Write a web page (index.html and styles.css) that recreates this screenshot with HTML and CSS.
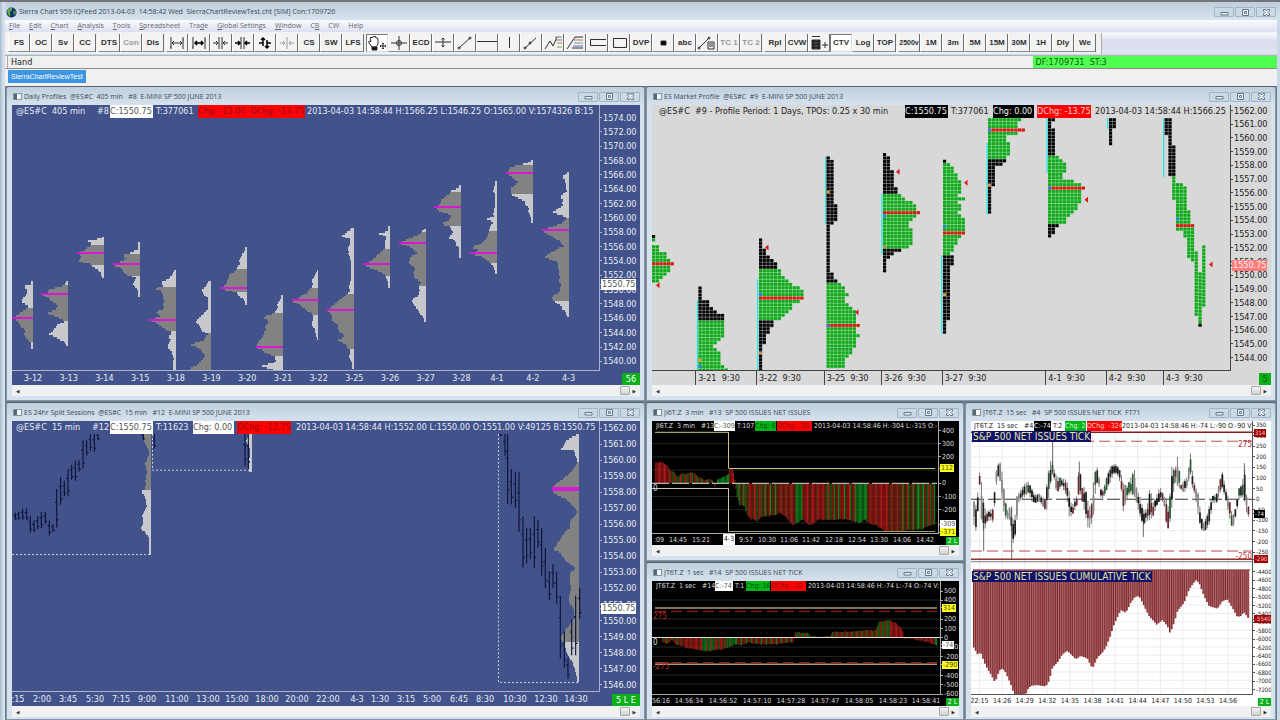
FILE: index.html
```html
<!DOCTYPE html>
<html lang="en">
<head>
<meta charset="utf-8">
<title>Sierra Chart</title>
<link rel="stylesheet" href="styles.css">
</head>
<body>
<div class="app">
  <header class="titlebar">
    <svg class="logo" viewBox="0 0 12 12"><circle cx="6" cy="6" r="5.5" fill="#12306e"/><path d="M2 3Q4 0 7 1L6 4 4 6 5 9 4 10Q0 7 2 3Z" fill="#5fb04a"/><path d="M8 4L11 5 10 9 8 8Z" fill="#4a9a50"/></svg>
    <h1 class="caption">Sierra Chart 959 IQFeed 2013-04-03&nbsp; 14:58:42 Wed&nbsp; SierraChartReviewTest.cht [SIM] Con:1709726</h1>
    <div class="winbtns"><button aria-label="Minimize"><svg viewBox="0 0 9 7"><path d="M1 3.5H8V6H1Z"/></svg></button><button aria-label="Restore"><svg viewBox="0 0 9 7"><path d="M1.5 .5H7.5V6.5H1.5ZM3.5 2.5H5.5V4.5H3.5Z"/></svg></button><button aria-label="Close"><svg viewBox="0 0 9 7"><path d="M1.5 .5H3.5L4.5 2 5.5 .5H7.5V2L6 3.5 7.5 5V6.5H5.5L4.5 5 3.5 6.5H1.5V5L3 3.5 1.5 2Z"/></svg></button></div>
  </header>
  <nav class="menu">
    <button><u>F</u>ile</button><button><u>E</u>dit</button><button><u>C</u>hart</button><button><u>A</u>nalysis</button><button><u>T</u>ools</button><button><u>S</u>preadsheet</button><button>Tra<u>d</u>e</button><button><u>G</u>lobal Settings</button><button><u>W</u>indow</button><button>C<u>B</u></button><button>CW</button><button>Help</button>
  </nav>
  <div class="toolbar">
    <div class="group"><button>FS</button><button>OC</button><button>Sv</button><button>CC</button></div>
    <div class="group"><button>DTS</button><button class="dim">Con</button><button>Dis</button></div>
    <div class="group">
      <button aria-label="Bar spacing wide"><svg viewBox="0 0 20 16"><path d="M4 2V14M16 2V14M4 12H3M16 5H17M5 8H15M7 6L5 8 7 10M13 6L15 8 13 10"/></svg></button>
      <button aria-label="Bar spacing medium"><svg viewBox="0 0 20 16"><path d="M4 2V14M16 2V14M4 12H3M16 5H17"/><path class="bold" d="M6 8H14M8 6L6 8 8 10M12 6L14 8 12 10"/></svg></button>
      <button aria-label="Bar spacing narrow"><svg viewBox="0 0 20 16"><path d="M8 2V14M11 2V14M2 8H7M5 6L7 8 5 10M17 8H12M14 6L12 8 14 10"/></svg></button>
      <button aria-label="Bar spacing tight"><svg viewBox="0 0 20 16"><path d="M8 2V14M11 2V14"/><path class="bold" d="M2 8H7M5 6L7 8 5 10M17 8H12M14 6L12 8 14 10"/></svg></button>
      <button aria-label="Scale vertical"><svg viewBox="0 0 20 16"><path class="bold" d="M8 4V11M12 5V12M4 8H8M12 8H16M6 5L8 3 10 5M10 11L12 13 14 11"/></svg></button>
      <button aria-label="Scale reset" class="dim"><svg viewBox="0 0 20 16"><path d="M10 2V14M3 8H8M6 6L8 8 6 10M17 8H12M14 6L12 8 14 10"/></svg></button>
      <button>CS</button><button>SW</button><button>LFS</button>
    </div>
    <div class="group">
      <button class="on" aria-label="Hand"><svg viewBox="0 0 20 16"><path d="M5 12L2 8Q1 6 3 6L4 7 3 3Q4 1 5 3Q6 0 7 2Q9 0 9 3Q11 2 11 5V9L9 12Z" fill="#fff"/><path d="M5 12H10V15H5Z" fill="#111"/><path d="M13 11H19M16 8V14M14 10L13 11 14 12M18 10L19 11 18 12M15 9L16 8 17 9M15 13L16 14 17 13"/></svg></button>
      <button aria-label="Crosshair"><svg viewBox="0 0 20 16"><path d="M2 8H18M10 1V15"/><circle cx="10" cy="8" r="2.5"/></svg></button>
      <button>ECD</button>
      <button aria-label="Balance"><svg viewBox="0 0 20 16"><path d="M2 7H18M10 3V12M8.500 10.500L10 12 11.500 10.500M8.500 4.500L10 3 11.500 4.500"/></svg></button>
      <button aria-label="Line"><svg viewBox="0 0 20 16"><path d="M4 13L15 3"/><circle cx="4" cy="13" r="1"/><circle cx="15" cy="3" r="1"/></svg></button>
      <button aria-label="Horizontal line"><svg viewBox="0 0 20 16"><path d="M0 6.500H20"/></svg></button>
      <button aria-label="Vertical line"><svg viewBox="0 0 20 16"><path d="M10.500 2V13"/></svg></button>
      <button aria-label="Ray"><svg viewBox="0 0 20 16"><path d="M4 13L15 3"/><circle cx="4" cy="13" r="1"/><circle cx="9" cy="8" r="1"/></svg></button>
      <button aria-label="Expansion"><svg viewBox="0 0 20 16"><path d="M2 14L7 6 10 11 14 2"/><path d="M12 2H19M13 5H19" stroke="#777"/><path d="M14 8H19" stroke="#c66"/><path d="M14 12H19" stroke="#6a6"/></svg></button>
      <button aria-label="Retracement"><svg viewBox="0 0 20 16"><path d="M2 14L10 2H18M7 13H18"/><path d="M9 5H18" stroke="#c66"/><path d="M9 8H18" stroke="#6a6"/><path d="M8 11H18" stroke="#66c"/></svg></button>
      <button aria-label="Extended rectangle"><svg viewBox="0 0 20 16"><path d="M19 4.500H3.500V10.500H19"/></svg></button>
      <button aria-label="Rectangle"><svg viewBox="0 0 20 16"><path d="M4.500 3.500H17.500V12.500H4.500Z"/></svg></button>
      <button>DVP</button>
      <button aria-label="Marker"><svg viewBox="0 0 20 16"><path d="M8 6H13V10H8Z" fill="#000"/></svg></button>
      <button>abc</button>
      <button aria-label="Calculator"><svg viewBox="0 0 20 16"><path d="M2 13L12 3M11 7H17V14H11ZM12 9H16M12 11H16"/><circle cx="2" cy="13" r="1"/><circle cx="12" cy="3" r="1"/></svg></button>
      <button class="dim">TC 1</button><button class="dim">TC 2</button>
    </div>
    <div class="group">
      <button>Rpl</button><button>CVW</button>
      <button aria-label="Trade grid"><svg viewBox="0 0 20 16"><path d="M3 5H11V14H3Z" fill="#111"/><path d="M3 1.500H11M13 10H19M16 7V13"/><path d="M3 8H11M3 11H11M6 5V14M8 5V14" stroke="#777" stroke-width=".5"/></svg></button>
      <button class="on">CTV</button><button>Log</button><button>TOP</button>
    </div>
    <div class="group"><button class="narrow">2500v</button><button>1M</button><button>3m</button><button>5M</button><button>15M</button><button>30M</button><button>1H</button><button>Dly</button><button>We</button></div>
    <div class="rest"></div>
  </div>
  <div class="status"><output class="hint">Hand</output><output class="feed">DF:1709731&nbsp; ST:3</output></div>
  <div class="tabs"><button>SierraChartReviewTest</button></div>

  <main class="mdi">
    <section class="win blue" id="w8">
      <div class="bar"><span class="ico"></span><h2 class="caption">Daily Profiles&nbsp; @ES#C&nbsp; 405 min&nbsp;&nbsp; #8&nbsp; E-MINI SP 500 JUNE 2013</h2></div>
      <div class="chart">
        <div class="view">
          <div class="quote"><span class="sym">@ES#C&nbsp; 405 min</span><span class="num">#8</span><span class="white close">C:1550.75</span><span class="ticks">T:377061</span><span class="red chg2">Chg: -13.00&nbsp; DChg: -13.75</span><span>2013-04-03 14:58:44 H:1566.25 L:1546.25 O:1565.00 V:1574326 B:15</span></div>
          <svg class="plot" viewBox="12 118 587 253" preserveAspectRatio="none"></svg>
        </div>
        <div class="price"></div><div class="time"></div><div class="corner"><b>56</b></div>
      </div>
    </section>

    <section class="win grey" id="w9">
      <div class="bar"><span class="ico"></span><h2 class="caption">ES Market Profile&nbsp; @ES#C&nbsp; #9&nbsp; E-MINI SP 500 JUNE 2013</h2></div>
      <div class="chart">
        <div class="view">
          <div class="quote"><span class="sym long">@ES#C&nbsp; #9 - Profile Period: 1 Days, TPOs: 0.25 x 30 min</span><span class="black close">C:1550.75</span><span class="ticks">T:377061</span><span class="black chg">Chg: 0.00</span><span class="red dchg">DChg: -13.75</span><span>2013-04-03 14:58:44 H:1566.25</span></div>
          <svg class="plot" viewBox="652 118 578 253" preserveAspectRatio="none"></svg>
        </div>
        <div class="price"></div><div class="time"></div><div class="corner"><b class="one">5</b></div>
      </div>
    </section>

    <section class="win blue last" id="w12">
      <div class="bar"><span class="ico"></span><h2 class="caption">ES 24hr Split Sessions&nbsp; @ES#C&nbsp; 15 min&nbsp;&nbsp; #12&nbsp; E-MINI SP 500 JUNE 2013</h2></div>
      <div class="chart">
        <div class="view">
          <div class="quote"><span class="sym">@ES#C&nbsp; 15 min</span><span class="num">#12</span><span class="white close">C:1550.75</span><span class="ticks">T:11623</span><span class="white chg">Chg: 0.00</span><span class="red dchg">DChg: -13.75</span><span>2013-04-03 14:58:44 H:1552.00 L:1550.00 O:1551.00 V:49125 B:1550.75</span></div>
          <svg class="plot" viewBox="12 433 587 259" preserveAspectRatio="none"></svg>
        </div>
        <div class="price"></div><div class="time"></div><div class="corner"><b class="wide">5 L E</b></div>
      </div>
    </section>

    <div class="quad">
      <section class="win dark" id="w13">
        <div class="bar"><span class="ico"></span><h2 class="caption">JI6T.Z&nbsp; 3 min&nbsp;&nbsp; #13&nbsp; SP 500 ISSUES NET ISSUES</h2></div>
        <div class="chart">
          <div class="view">
            <div class="quote"><span class="sym">JI6T.Z&nbsp; 3 min</span><span class="num">#13</span><span class="white close">C:-309</span><span class="ticks">T:107</span><span class="green chg">Chg: 6</span><span class="red dchg">DChg: -36</span><span>2013-04-03 14:58:46 H:-304 L:-315 O:-</span></div>
            <svg class="plot" viewBox="652 431 286 102" preserveAspectRatio="none"></svg>
            <span class="note zero13">0</span>
          </div>
          <div class="price"></div><div class="time"></div><div class="corner"><b>2 L</b></div>
        </div>
      </section>
      <section class="win white-bg last tall" id="w4">
        <div class="bar"><span class="ico"></span><h2 class="caption">JT6T.Z&nbsp; 15 sec&nbsp;&nbsp; #4&nbsp; SP 500 ISSUES NET TICK&nbsp; FT71</h2></div>
        <div class="chart">
          <div class="view">
            <div class="quote"><span class="sym">JT6T.Z&nbsp; 15 sec</span><span class="num">#4</span><span class="black close">C:-74</span><span class="ticks">T:2</span><span class="green chg">Chg: 2</span><span class="red dchg">DChg: -324</span><span>2013-04-03 14:58:46 H:-74 L:-90 O:-90 V:</span></div>
            <svg class="plot" viewBox="971 431 281 264" preserveAspectRatio="none"></svg>
            <span class="study tick">S&amp;P 500 NET ISSUES TICK</span>
            <span class="study cumulative">S&amp;P 500 NET ISSUES CUMULATIVE TICK</span>
            <span class="note hi4">275</span><span class="note lo4">-250</span>
          </div>
          <div class="price"></div><div class="time"></div><div class="corner"><b>2 L</b></div>
        </div>
      </section>
      <section class="win dark last" id="w14">
        <div class="bar"><span class="ico"></span><h2 class="caption">JT6T.Z&nbsp; 1 sec&nbsp;&nbsp; #14&nbsp; SP 500 ISSUES NET TICK</h2></div>
        <div class="chart">
          <div class="view">
            <div class="quote"><span class="sym">JT6T.Z&nbsp; 1 sec</span><span class="num">#14</span><span class="white close">C:-74</span><span class="ticks">T:1</span><span class="green chg">Chg: 16</span><span class="red dchg">DChg: -32</span><span>2013-04-03 14:58:46 H:-74 L:-74 O:-74 V:</span></div>
            <svg class="plot" viewBox="652 591 288 103" preserveAspectRatio="none"></svg>
            <span class="note hi14">275</span><span class="note zero14">0</span><span class="note lo14">-275</span>
          </div>
          <div class="price"></div><div class="time"></div><div class="corner"><b>2 L</b></div>
        </div>
      </section>
    </div>
  </main>
</div>
<script src="script.js"></script>
</body>
</html>
```

FILE: styles.css
```css
* { box-sizing: border-box; }
body { margin: 0; background: #c9d8e8; color: #222; font-family: "DejaVu Sans Condensed", "Noto Sans", sans-serif; font-size: 9px; line-height: 12px; }
button { font: inherit; color: inherit; margin: 0; padding: 0; border: 0; background: none; }
h1, h2 { margin: 0; font-weight: normal; }

.app { display: flex; flex-direction: column; height: 100vh; min-height: 480px; border-top: 2px solid #70757c; padding: 0 3px 0 5px; background: linear-gradient(90deg, #a9bacb 0, #dbe7f1 4px, #c9d8e8 5px); overflow: hidden; }
.caption { flex: 1; min-width: 0; overflow: hidden; white-space: nowrap; font-family: "Open Sans", "Noto Sans", sans-serif; font-size: 7px; line-height: 12px; color: #3c4854; }
.titlebar { display: flex; align-items: center; gap: 2px; height: 18px; padding-top: 2px; background: linear-gradient(#bfcddb, #d7e4ef); margin-right: -3px; padding-right: 4px; }
.logo { width: 11px; height: 11px; margin-left: 1px; }
.winbtns { display: flex; gap: 1px; }
.winbtns button { display: grid; place-items: center; width: 20px; height: 10px; border: 1px solid #a3b4c5; border-radius: 1px; background: #cbd9e6; }
.winbtns svg { width: 9px; height: 7px; fill: #eef3f8; stroke: #66778a; stroke-width: 1; }

.menu { display: flex; gap: 9px; height: 12px; padding-left: 4px; background: linear-gradient(#fbfbfe, #dcdff0); font-family: "Open Sans", "Noto Sans", sans-serif; font-size: 7px; line-height: 10px; color: #666870; }
.toolbar { display: flex; gap: 2px; height: 22px; padding-left: 3px; background: #f1f1f1; }
.group { display: flex; padding: 2px 0 0; }
.group button { display: grid; place-items: center; width: 22px; height: 18px; border-right: 1px solid #6e6e6e; border-bottom: 1px solid #8c8c8c; border-left: 1px solid #fff; font-family: "Liberation Sans", sans-serif; font-weight: bold; font-size: 8px; color: #2e2e2e; background: #f3f3f3; }
.group .on { background: #fff; border: 1px solid #777; border-right-color: #ddd; border-bottom-color: #ddd; }
.group .dim { color: #9a9a9a; }
.group .narrow { font-size: 7px; }
.group svg { width: 20px; height: 16px; fill: none; stroke: currentColor; stroke-width: 1; }
.group svg .bold { stroke: #000; stroke-width: 1.5; }
.rest { flex: 1; margin: 1px 0 0 3px; border-left: 1px solid #aaa; background: linear-gradient(#fafafe, #d9dced 40%, #dfe2f1); }
.status { display: flex; height: 14px; margin-top: 1px; border-top: 1px solid #b5b5b5; border-bottom: 1px solid #8a8a8a; background: #f0f0f0; line-height: 13px; }
.status output { padding-left: 3px; }
.hint { flex: 1028; margin-left: 2px; border-left: 1px solid #aaa; }
.feed { flex: 243; background: #50ff50; color: #145514; white-space: nowrap; }
.tabs { height: 17px; padding-left: 3px; background: #f0f0f0; }
.tabs button { display: block; height: 13px; padding: 0 3px; margin-top: 1px; background: #3d96e2; color: #fff; font-family: "Liberation Sans", sans-serif; font-size: 7px; }

.mdi { flex: 1; min-height: 0; display: grid; grid-template: minmax(0, 315fr) minmax(0, 318fr) / minmax(0, 639fr) minmax(0, 630fr); gap: 1px; padding-left: 1px; padding-right: 1px; background: #6f7d8c; }
.quad { display: grid; grid-template: minmax(0, 159fr) minmax(0, 158fr) / minmax(0, 318fr) minmax(0, 311fr); gap: 1px; }
.tall { grid-row: span 2; }
.win { display: flex; flex-direction: column; min-width: 0; padding: 0 4px 4px 5px; border: 1px solid #8595a6; border-top-color: #566473; border-radius: 3px 3px 0 0; background: linear-gradient(#c0cfdd, #d5e2ee 18px); overflow: hidden; }
.last { padding-bottom: 2px; }
.bar { display: flex; align-items: center; gap: 2px; flex: 0 0 18px; padding-top: 1px; }
.ico { width: 9px; height: 7px; margin-left: 1px; border: 1px solid #8393a3; background: linear-gradient(90deg, #567 3px, #f4f8fb 3px); }
.chart { flex: 1; min-height: 0; display: grid; grid-template: minmax(0, 1fr) 14px / minmax(0, 1fr) 41px; background: var(--bg); color: var(--ink); overflow: hidden; }
.blue { --bg: #42528a; --ink: #e6ebf4; --line: #aab3cc; }
.grey { --bg: #d8d8d8; --ink: #222; --line: #444; }
.dark { --bg: #000; --ink: #ddd; --line: #aaa; }
.white-bg { --bg: #fff; --ink: #222; --line: #555; }
.view { position: relative; display: flex; flex-direction: column; min-height: 0; border-bottom: 1px solid var(--line); overflow: hidden; }
.quote { display: flex; flex: 0 0 13px; padding-left: 4px; line-height: 13px; white-space: pre; overflow: hidden; }
.quote span { flex: none; overflow: hidden; }
.plot { display: block; flex: 1; width: 100%; min-height: 0; }
.sym { width: 81px; } .num { width: 13px; } .close { width: 43px; } .ticks { width: 45px; padding-left: 3px; } .chg2 { width: 107px; margin-right: 2px; } .chg { width: 41px; margin-right: 3px; } .dchg { width: 54px; margin-right: 4px; }
#w9 .quote { padding-left: 7px; } #w9 .long { width: 246px; }
#w12 .sym { width: 76px; } #w12 .num { width: 18px; } #w12 .ticks { width: 40px; } #w12 .dchg { margin-right: 5px; }
.white { background: #fff; color: #555; } .black { background: #000; color: #eee; } .red { background: #f00; color: #8f1010; } .green { background: #00b418; color: #065006; }
#w9 .red, #w4 .red { color: #ffd0d0; } #w4 .green { color: #d8ffd8; }

.price { display: flex; flex-direction: column; border-left: 1px solid var(--line); }
.price span { display: flex; align-items: center; height: 0; flex: none; white-space: nowrap; gap: 1px; }
.price span::before { content: ""; width: 2px; height: 1px; flex: none; background: var(--line); }
.price b { font-weight: normal; position: relative; z-index: 1; margin-left: -2px; padding: 0 1px; line-height: 11px; }
.time { display: flex; overflow: hidden; line-height: 15px; white-space: pre; }
.time span { display: flex; justify-content: center; width: 0; flex: none; }
.time b { font-weight: normal; background: #fff; color: #222; padding: 0 1px; }
.grey .time span { justify-content: flex-start; height: 14px; border-left: 1px solid #444; padding-left: 2px; }
.corner { display: flex; justify-content: flex-end; align-items: flex-end; }
.corner b { width: 18px; height: 12px; line-height: 12px; text-align: center; font-weight: normal; background: #0bb11a; color: #fff; }
.corner .one { width: 12px; color: #075a0c; } .corner .wide { width: 28px; }
.p-white { background: #fff; color: #555; } .p-pink { background: #ff7d7d; color: #fff0f0; } .p-yellow { background: #ffff20; color: #444400; } .p-black { background: #000; color: #eee; } .p-maroon { background: #a00000; color: #f6cccc; }

.scroll { display: flex; align-items: center; flex: 0 0 11px; padding: 0 4px; background: #f1f1f1; color: #333; font-size: 5px; line-height: 8px; }
.scroll .thumb { width: 10px; height: 9px; margin-left: auto; margin-right: 3px; border: 1px solid #a6a6a6; border-radius: 1px; background: linear-gradient(#f5f5f5, #cfcfcf); }

.quad .chart { grid-template: minmax(0, 1fr) 11px / minmax(0, 1fr) 21px; font-size: 7px; }
#w14 .chart, #w4 .chart { grid-template-columns: minmax(0, 1fr) 19px; }
.quad .quote { flex-basis: 10px; line-height: 10px; }
.quad .time { line-height: 13px; }
.quad .time b { line-height: 11px; }
.quad .price b { line-height: 8px; }
.quad .corner b { width: 13px; height: 8px; line-height: 8px; }
.quad .sym { width: 45px; } .quad .num { width: 13px; } .quad .close { width: 21px; } .quad .ticks { width: 20px; padding-left: 2px; } .quad .chg { width: 21px; margin-right: 1px; } .quad .dchg { width: 35px; margin-right: 2px; }
#w14 .sym { width: 46px; } #w14 .close { width: 18px; } #w14 .ticks { width: 13px; } #w14 .chg { width: 24px; }
#w4 .quote { padding-left: 3px; } #w4 .sym { width: 50px; } #w4 .num { width: 10px; } #w4 .close { width: 17px; } #w4 .ticks { width: 14px; } #w4 .dchg { margin-right: 0; }
#w4 .price { font-size: 6px; }
.note { position: absolute; font-size: 8px; line-height: 9px; color: #c22c2c; }
.zero13, .zero14 { left: 1px; color: #ddd; } .zero13 { top: 56%; } .zero14 { top: 50%; }
.hi14 { left: 1px; top: 27%; } .lo14 { left: 1px; top: 72%; }
.hi4 { right: 0; top: 7%; } .lo4 { right: 0; top: 48%; }
.study { position: absolute; left: 1px; padding: 0 1px; background: #10106e; color: #e6e6a0; font-size: 10px; line-height: 11px; white-space: nowrap; }
.tick { top: 10px; } .cumulative { top: 55%; }
```

FILE: script.js
```js
const $ = (s) => document.querySelector(s);
let seed = 7;
const rnd = () => (seed = (seed * 16807) % 2147483647) / 2147483647;
const rect = (x, y, w, h, f) => `<rect x="${x.toFixed(1)}" y="${y.toFixed(1)}" width="${w.toFixed(1)}" height="${h.toFixed(1)}" fill="${f}"/>`;
const line = (d, c, extra = '') => `<path d="${d}" fill="none" stroke="${c}" ${extra}/>`;
const draw = (id, parts) => { $(id + ' .plot').innerHTML = parts.join(''); };

function interp(pts, x) {
  if (x <= pts[0][0]) return pts[0].slice(1);
  for (let i = 1; i < pts.length; i++) {
    if (x <= pts[i][0]) {
      const a = pts[i - 1], b = pts[i], t = (x - a[0]) / (b[0] - a[0]);
      return a.slice(1).map((v, k) => v + (b[k + 1] - v) * t);
    }
  }
  return pts[pts.length - 1].slice(1);
}

/* Frame controls shared by every chart window */
document.querySelectorAll('.win').forEach((w) => {
  w.querySelector('.bar').append($('.winbtns').cloneNode(true));
  w.insertAdjacentHTML('beforeend', '<div class="scroll"><span>◀</span><span class="thumb"></span><span>▶</span></div>');
});

/* Axis labels: growing spacers between zero-size label boxes */
function axis(sel, from, to, items) {
  let pos = from, html = '';
  items.sort((a, b) => a[0] - b[0]).forEach(([p, text, badge]) => {
    html += `<i style="flex:${Math.max(0, p - pos).toFixed(2)} 0 0"></i><span>${badge ? `<b class="${badge}">${text}</b>` : text}</span>`;
    pos = Math.max(pos, p);
  });
  $(sel).innerHTML = html + `<i style="flex:${(to - pos).toFixed(2)} 0 0"></i>`;
}
const steps = (n, p0, dp, v0, dv, dec = 0) => Array.from({ length: n }, (_, i) => [p0 + dp * i, (v0 + dv * i).toFixed(dec)]);

axis('#w8 .price', 105, 371, [...steps(18, 117.5, 14.35, 1574, -2, 2), [284.5, '1550.75', 'p-white']]);
axis('#w9 .price', 105, 371, [...steps(19, 110.5, 13.73, 1562, -1, 2), [265, '1550.75', 'p-pink']]);
axis('#w12 .price', 421, 692, [...steps(17, 428, 16.05, 1562, -1, 2), [608.5, '1550.75', 'p-white']]);
axis('#w13 .price', 421, 534, [...steps(7, 430.5, 13.2, 400, -100), [468, '112', 'p-yellow'], [524, '-309', 'p-white'], [532, '-371', 'p-yellow']].filter((d) => d[1] !== '100'));
axis('#w14 .price', 581, 694, [...steps(12, 591, 9.3, 500, -100), [607.5, '314', 'p-yellow'], [644, '-74', 'p-white'], [664, '-290', 'p-yellow']].filter((d) => d[1] !== '300' && d[1] !== '-300'));
axis('#w4 .price', 421, 695, [...steps(13, 425, 10.6, 350, -50), [432.5, '314', 'p-maroon'], [514, '-74', 'p-black'], [559.5, '-290', 'p-maroon'],
  ...steps(15, 572, 8.4, -4400, -200), [619.5, '-5540', 'p-maroon']]);

const days = ['3-12', '3-13', '3-14', '3-15', '3-18', '3-19', '3-20', '3-21', '3-22', '3-25', '3-26', '3-27', '3-28', '4-1', '4-2', '4-3'];
axis('#w8 .time', 12, 599, days.map((d, i) => [33 + 35.7 * i, d]));
axis('#w9 .time', 652, 1230, [[697, '3-21'], [757.5, '3-22'], [825, '3-25'], [881.7, '3-26'], [941.7, '3-27'], [1046.7, '4-1'], [1106.7, '4-2'], [1163.3, '4-3']].map(([p, t]) => [p, t + '  9:30']));
axis('#w12 .time', 12, 599, [[18, ':15'], [42, '2:00'], [68, '3:45'], [95, '5:30'], [121, '7:15'], [147, '9:00'], [177, '11:00'], [208, '13:00'], [237, '15:00'], [267, '18:00'], [297, '20:00'], [328, '22:00'], [357, '4-3'], [380, '1:30'], [406, '3:15'], [432, '5:00'], [459, '6:45'], [485, '8:30'], [515, '10:30'], [546, '12:30'], [576, '14:30']]);
axis('#w13 .time', 652, 938, [[659, ':09'], [678, '14:45'], [701, '15:21'], [729, '4-3', 'p-white'], [746, '9:57'], [767, '10:30'], [789, '11:06'], [811, '11:42'], [834, '12:18'], [857, '12:54'], [879, '13:30'], [902, '14:06'], [925, '14:42']]);
axis('#w14 .time', 652, 940, [[661, '56:16'], [689, '14:56:34'], [723, '14:56:52'], [757, '14:57:10'], [791, '14:57:28'], [825, '14:57:47'], [859, '14:58:05'], [893, '14:58:23'], [926, '14:58:41']]);
axis('#w4 .time', 971, 1252, ['22:15', '14:26', '14:29', '14:32', '14:35', '14:38', '14:41', '14:44', '14:47', '14:50', '14:53', '14:56'].map((t, i) => [979.5 + 22.6 * i, t]));

/* Volume profile: [y, width] points, value area between va0 and va1 */
function profile(xr, va0, va1, poc, pts, row = 1.8, noise = 2, pocH = 2) {
  let light = '', dark = '', i = 0, jitter = 0;
  for (let y = pts[0][0]; y < pts[pts.length - 1][0]; y += row, i++) {
    if (i % 2 === 0) jitter = (rnd() - 0.6) * noise;
    let w = interp(pts, y)[0];
    if (w > 4) w = Math.max(2, w + jitter);
    w = Math.max(2, w);
    const d = `M${(xr - w).toFixed(1)} ${y.toFixed(1)}H${xr}v${row}H${(xr - w).toFixed(1)}z`;
    if (y >= va0 - 0.5 && y < va1) dark += d; else light += d;
  }
  return `<g shape-rendering="crispEdges"><path fill="#c6c8cc" d="${light}"/><path fill="#828282" d="${dark}"/>${poc ? rect(xr - 27, poc - pocH / 2, 27, pocH, '#d818d0') : ''}</g>`;
}

draw('#w8', [
  [309, 342, 318.5, [[282, 1], [284, 2], [286, 8], [290, 6], [297, 8], [301, 12], [305, 6], [308, 4], [311, 10], [314, 14], [318, 19], [322, 14], [326, 12], [330, 8], [334, 9], [338, 6], [341, 4], [343, 1], [349.5, 1]]],
  [285, 321, 294.5, [[282, 2], [285, 4], [289, 18], [293, 22], [295, 27], [298, 20], [301, 16], [305, 10], [309, 12], [313, 22], [317, 12], [319, 5], [321, 4], [325, 12], [330, 14], [334, 20], [338, 12], [342, 4], [346, 1]]],
  [246, 265.5, 253.5, [[237, 2], [239, 8], [240, 16], [243, 12], [246, 14], [250, 20], [253, 26], [257, 24], [261, 26], [264, 14], [266, 12], [270, 6], [274, 4], [277, 1]]],
  [254.5, 276, 264.5, [[242, 1], [249, 2], [252, 8], [254, 12], [255, 18], [258, 12], [262, 20], [265, 27], [268, 18], [272, 18], [275, 12], [278, 4], [283, 8], [287, 5], [290, 2], [297, 1]]],
  [287, 331.5, 320.5, [[271, 1], [278, 6], [282, 14], [286, 12], [288, 22], [291, 14], [296, 12], [303, 12], [308, 12], [312, 20], [316, 16], [320, 27], [324, 18], [330, 8], [332, 6], [340, 6], [348, 9], [352, 4], [358, 2], [371, 3]]],
  [333.5, 372, 0, [[282, 3], [288, 9], [294, 8], [298, 3], [309, 3], [312, 8], [317, 12], [321, 17], [326, 13], [332, 8], [334, 4], [340, 8], [345, 20], [350, 10], [355, 7], [362, 10], [367, 20], [371, 22]]],
  [269, 292, 288.5, [[248, 1], [254, 5], [262, 8], [267, 8], [270, 12], [276, 18], [282, 20], [288, 26], [290, 22], [292, 12], [296, 8], [300, 3], [304, 1]]],
  [314, 357, 347.5, [[296, 1], [304, 5], [310, 8], [314, 10], [317, 20], [322, 14], [328, 18], [334, 18], [340, 22], [344, 25], [347, 26], [351, 20], [355, 14], [357, 8], [362, 6], [366, 22], [369, 14], [371, 6]]],
  [289, 315, 301, [[271, 1], [276, 4], [281, 7], [286, 6], [291, 10], [295, 16], [299, 20], [301, 27], [305, 20], [309, 14], [313, 6], [316, 5], [322, 6], [328, 5], [334, 3], [341, 1]]],
  [294.5, 350, 311, [[228, 3], [233, 8], [236, 13], [238, 4], [244, 5], [250, 7], [255, 5], [262, 3], [275, 3], [280, 4], [284, 5], [292, 5], [296, 10], [300, 16], [304, 20], [311, 27], [315, 22], [320, 22], [325, 16], [330, 16], [335, 10], [340, 16], [345, 8], [349, 6], [351, 3], [357, 7], [362, 3], [369, 1]]],
  [249, 276, 264.5, [[226, 1], [231, 3], [233, 11], [236, 4], [242, 6], [248, 5], [250, 8], [256, 14], [261, 18], [264, 27], [269, 16], [274, 6], [277, 4], [282, 2], [289, 1]]],
  [232, 285, 243.5, [[229, 2], [233, 6], [239, 18], [243, 27], [247, 16], [252, 8], [257, 16], [263, 18], [268, 10], [273, 13], [278, 10], [284, 4], [285, 8], [289, 7], [295, 8], [301, 15], [305, 12], [310, 7], [315, 4], [321, 1]]],
  [192, 226, 207.5, [[185, 1], [188, 3], [190, 9], [194, 12], [199, 20], [204, 22], [207, 27], [211, 22], [215, 10], [219, 12], [224, 20], [226, 12], [232, 8], [237, 12], [240, 6], [247, 3], [258, 1]]],
  [231, 263, 253.5, [[181, 1], [190, 4], [195, 2], [203, 2], [210, 3], [215, 4], [219, 10], [222, 5], [230, 8], [238, 10], [244, 18], [247, 25], [250, 18], [253, 27], [257, 14], [262, 8], [266, 4], [273, 1]]],
  [165, 193, 173, [[160, 1], [163, 8], [165, 18], [167, 22], [170, 24], [173, 26], [177, 20], [182, 14], [187, 23], [191, 22], [194, 20], [197, 18], [201, 9], [207, 6], [213, 3], [222, 1]]],
  [219, 300, 230.5, [[172, 1], [176, 6], [182, 3], [190, 2], [196, 8], [200, 5], [205, 7], [212, 16], [215, 5], [218, 2], [222, 6], [227, 18], [230, 26], [234, 20], [240, 10], [246, 6], [252, 18], [257, 24], [262, 12], [268, 10], [280, 9], [290, 8], [295, 14], [299, 17], [301, 14], [305, 10], [310, 4], [317, 1]]]
].map((p, i) => profile(32.7 + 35.72 * i, ...p)));

/* Market profile: rows of equal cells, "colour width*repeat@offset" */
const CW = 3.75, CH = 3.43;
function tpo(x, y, spec) {
  let out = '';
  const fill = { k: '#050505', g: '#12a81c', r: '#d01c10' };
  const under = { k: '#777', g: '#7fd486', r: '#e08c84' };
  spec.split(' ').forEach((tok) => {
    const [, c, w, n, o] = tok.match(/([kgr])(\d+)(?:\*(\d+))?(?:@(\d+))?/);
    for (let r = 0; r < (+n || 1); r++, y += CH) {
      const x0 = x + (+o || 0) * CW;
      if (+w) out += rect(x0, y, w * CW - 0.6, 3.3, under[c]);
      for (let i = 0; i < +w; i++) out += rect(x0 + i * CW, y, 3.1, 2.8, fill[c]);
    }
  });
  return out;
}
const cyan = (x, a, b) => rect(x, a, 1.4, b - a, '#30e4e4');
const arrow = (x, y) => `<path d="M${x - 2} ${y}l3.5 -3v6z" fill="#e01818"/>`;
const dot = (x, y, c) => rect(x, y, 3.1, 2.8, c);
draw('#w9', [
  tpo(652, 235.5, 'k1 g1 g0 g2*2 g4*2 g5 r6 g5*2 g4 g3 g2'),
  cyan(696.8, 301, 371), tpo(698.5, 287.3, 'k1*4 k3*2 k4 k5 k7*2 g7*5 g6 g5 g4 g5 g6*4 g7 g8 r10'), dot(698.5, 359.5, '#e0a030'), dot(698.5, 366, '#3080e0'),
  cyan(757, 280, 371), tpo(759, 239, 'k1*3 k2*2 k3 k4 k5*2 g6*2 g7 g8 g9 g11 g12*2 r12 g11 g9 g9 g8 g7 g6 k4*2 k3*2 k2*3 k1*8'), dot(759, 352.5, '#e09040'), dot(759, 293.7, '#3080e0'),
  cyan(825, 157, 224.5), tpo(826.6, 156.7, 'k1 k2*13 k3*5 k2 k1*14 k2*2 k3 g4 g5*2 g6 g5*2 g6 g7 g8*4 r9 g8*2 g9 g8*3 g7*2 g6 g5*3'), dot(826.6, 191, '#e0a030'), dot(826.6, 325.2, '#3080e0'),
  cyan(881.2, 194, 255), tpo(883, 153.3, 'k1 k2*4 k3*5 k4*2 g5 g6 g8 g9*2 r10 g9 g8 g7*2 g8*4 g8 g7 k5 k3 k2 k1*4'), dot(883, 246, '#c09030'), dot(883, 215, '#3080e0'),
  cyan(941, 256, 335), tpo(943, 160, 'k1 g2 g3*2 g4*2 g5*4 g4 g6 g4 g5*2 g4 g5 g6*4 r6 g5 g4*2 g3*2 g2 k3*3 k2*16 k1*4'), dot(943, 294, '#e0a030'), dot(943, 225.2, '#3080e0'),
  cyan(986.5, 143, 215), tpo(988, 118.3, 'g9 g8 g8 r10 g8 g5*2 g6*4 g5 k5 k4 k2*6 k1*8'), dot(988, 128.6, '#3080e0'), dot(988, 184, '#e09040'),
  cyan(1046.3, 118, 173), tpo(1048, 118.3, 'k2 k1*2 k2*8 g3 g4 g5*3 g4*2 g7 g9 r10 g9*4 g8*2 g7 g6 g5 g5 k3 k2*2 k1'), dot(1048, 186.9, '#3080e0'),
  cyan(1107, 118, 129), tpo(1109, 118.3, 'k2*3 k1*5'),
  cyan(1163, 118, 177), tpo(1164.7, 118.3, 'k2*5 k1*3@1 k2*9@1 g1*2@2 g3@2 g4*4@2 g3*3@3 g4*3@3 g4@3 r5@3 g5@3 g3*2@5 g2*6@6 g1@7'),
  dot(1176, 218, '#3080e0'), tpo(1164.7, 252, 'g1*19@8'), tpo(1164.7, 273, 'g1*15@9 k1@9'), tpo(1164.7, 246, 'g1*18@10'),
  ...[[658, 286], [767, 248], [857, 313], [898, 172], [966, 183], [1086.5, 200], [1211, 265]].map(([x, y]) => arrow(x, y))
]);

/* Split session chart */
const ohlc = (ox, list) => list.map(([x, a, b]) => {
  const px = ox + x / 3, t = 400 + a / 3, u = 400 + b / 3;
  return line(`M${px} ${t}V${u}M${px - 1.8} ${t + (u - t) * 0.35}h1.8M${px} ${t + (u - t) * 0.8}h1.8`, '#0b1238', 'stroke-width="1.1"');
});
const dotted = (d) => line(d, '#c8d0e4', 'stroke-dasharray="2 2"');
draw('#w12', [
  profile(150.7, 420, 489, 0, [[433, 7], [440, 6], [447, 3], [452, 1], [456, 3], [463, 6], [470, 4], [480, 5], [488, 7], [490, 11], [493, 6], [497, 5], [505, 4], [510, 7], [515, 9], [520, 7], [525, 9], [528, 11], [532, 5], [537, 2], [554, 2]], 2, 1),
  profile(252, 0, 0, 0, [[433, 4], [440, 6], [443, 3], [450, 2], [460, 3], [470, 3]], 2, 1),
  profile(579, 461, 642, 488, [[433, 3], [438, 12], [443, 15], [447, 18], [449, 6], [455, 3], [460, 1], [470, 8], [475, 14], [482, 24], [487, 28], [492, 24], [497, 14], [503, 8], [511, 2], [520, 8], [527, 10], [535, 17], [543, 22], [549, 26], [552, 18], [560, 14], [565, 6], [568, 4], [572, 10], [580, 9], [590, 8], [600, 11], [607, 6], [617, 4], [625, 10], [632, 14], [638, 19], [641, 17], [643, 14], [650, 13], [658, 10], [662, 7], [670, 4], [683, 1]], 2, 1, 4),
  ...ohlc(0, [[46, 337, 360], [56, 335, 358], [68, 324, 358], [80, 324, 360], [91, 347, 397], [102, 360, 395], [113, 348, 387], [124, 335, 383], [136, 335, 370], [148, 360, 406], [159, 372, 395], [170, 265, 382], [182, 228, 313], [193, 240, 287], [204, 205, 287], [215, 192, 237], [226, 180, 240], [237, 178, 213], [249, 118, 205], [260, 118, 165], [271, 96, 150], [283, 96, 153], [294, 96, 118], [430, 96, 118], [463, 97, 143], [735, 97, 195], [745, 97, 205]]),
  ...ohlc(320, [[542, 97, 105], [555, 97, 165], [563, 97, 310], [574, 205, 312], [586, 213, 322], [597, 213, 395], [609, 348, 503], [620, 383, 490], [631, 383, 478], [643, 348, 503], [654, 358, 443], [665, 383, 527], [676, 443, 565], [688, 515, 600], [699, 492, 565], [710, 515, 612], [721, 588, 778], [733, 695, 805], [744, 775, 840], [755, 660, 768], [767, 588, 768], [779, 563, 658]]),
  dotted('M12 554.5H150'), dotted('M152.5 433V469.5H252'), dotted('M498.5 433V683.5H578')
]);

/* Histogram study around a zero line */
function histogram(ox, oy, zero, x0, x1, step, pts, palette) {
  let out = '';
  for (let x = x0, i = 0; x < x1; x += step, i++) {
    const y = interp(pts, x)[0] + (rnd() - 0.5) * 4;
    out += rect(ox + x / 3, oy + Math.min(y, zero) / 3, step / 3 - 0.25, Math.abs(y - zero) / 3, palette(x, i));
  }
  return out;
}
const mix = (zones) => (x, i) => {
  const z = zones.filter((d) => d[0] <= x).pop()[1];
  return { r: '#ac1a1a', g: '#10881f', o: '#5c3a10' }[z[i % z.length]];
};
const grid = (x0, x1, ys, c) => ys.map((y) => line(`M${x0} ${y}H${x1}`, c));
draw('#w13', [
  ...grid(652, 938, [443.7, 457, 470, 496.5, 509.7, 522.9], '#242424'),
  histogram(645, 400, 250, 31, 869, 3.7, [[31, 187], [50, 188], [65, 195], [75, 212], [85, 215], [95, 230], [110, 220], [125, 222], [135, 215], [150, 222], [160, 232], [175, 240], [190, 237], [200, 240], [208, 264], [215, 240], [225, 235], [240, 228], [250, 222], [252, 205], [262, 208], [268, 240], [275, 290], [283, 315], [297, 318], [305, 345], [315, 357], [335, 362], [350, 350], [390, 345], [405, 338], [420, 350], [440, 375], [455, 368], [470, 358], [490, 375], [505, 372], [515, 360], [600, 358], [640, 368], [660, 360], [670, 370], [690, 375], [705, 385], [720, 393], [760, 394], [790, 391], [830, 388], [845, 380], [868, 372]],
    mix([[0, 'rrrrrrrr'], [70, 'rogo'], [215, 'g'], [250, 'rr'], [275, 'rgogo'], [305, 'rrro'], [330, 'rrgo'], [360, 'rgoo'], [400, 'rro'], [450, 'ggg'], [468, 'rrrrro'], [545, 'rgo'], [580, 'rrrgo'], [628, 'gggg'], [667, 'rrro'], [700, 'rrrrrrr'], [730, 'ro'], [765, 'rgoo'], [815, 'gggr'], [835, 'ogr']])),
  line('M652 483.3H937', '#ddd', 'stroke-dasharray="17 3"'),
  line('M655 432.3H728.5M728.5 468.5H935', '#c8c870'), line('M728.5 432V468', '#c8c870'),
  line('M652 488.5H728.5V532', '#c9c9b8'), line('M728 531.5H935', '#a0a060')
]);
draw('#w14', [
  ...grid(652, 940, [600, 619, 628, 647, 656.5, 675, 684], '#242424'),
  histogram(645, 560, 232, 52, 874, 3.75, [[52, 245], [65, 252], [80, 240], [90, 255], [110, 258], [130, 265], [160, 270], [185, 273], [205, 270], [230, 268], [250, 262], [270, 252], [290, 255], [310, 248], [325, 252], [380, 254], [410, 250], [445, 248], [447, 218], [485, 218], [495, 229], [530, 231], [545, 226], [555, 230], [560, 216], [640, 213], [665, 210], [680, 213], [695, 205], [700, 184], [735, 182], [750, 190], [765, 200], [772, 212], [775, 236], [800, 236], [820, 242], [840, 245], [860, 252], [872, 255]],
    mix([[0, 'grro'], [110, 'rrrrro'], [168, 'gggr'], [205, 'rgrr'], [240, 'gggo'], [270, 'rrog'], [447, 'ggro'], [560, 'gror'], [700, 'ggro'], [735, 'r'], [775, 'rro'], [840, 'rrr'], [866, 'g']])),
  line('M652 637.5H940', '#ddd'),
  line('M655 608H937M655 664.3H937', '#a89a70', 'stroke-width="1.6"'),
  line('M655 611.3H937M655 662.6H937', '#a82222', 'stroke-dasharray="11 5"')
]);

/* Candles and cumulative tick */
const env = [[25, 300, 370], [35, 320, 400], [43, 215, 240], [50, 250, 370], [57, 320, 400], [65, 335, 370], [75, 330, 360], [85, 325, 370], [93, 215, 260], [100, 190, 230], [105, 185, 240], [112, 220, 310], [120, 300, 355], [130, 340, 360], [136, 310, 360], [142, 350, 430], [148, 370, 430], [155, 290, 370], [160, 280, 310], [170, 265, 300], [180, 250, 290], [190, 245, 280], [200, 265, 305], [210, 285, 310], [222, 280, 305], [240, 300, 330], [247, 240, 330], [255, 185, 260], [262, 180, 225], [268, 210, 240], [275, 230, 280], [290, 235, 260], [305, 240, 290], [312, 270, 350], [320, 320, 350], [335, 290, 320], [343, 185, 270], [350, 265, 300], [360, 260, 340], [370, 310, 390], [378, 330, 380], [385, 250, 350], [393, 200, 260], [400, 205, 240], [405, 265, 290], [415, 270, 300], [425, 230, 270], [435, 200, 250], [443, 195, 230], [450, 190, 220], [460, 200, 230], [468, 220, 260], [475, 250, 335], [485, 260, 300], [495, 240, 280], [508, 205, 290], [515, 270, 310], [525, 290, 350], [535, 330, 380], [545, 330, 365], [555, 260, 360], [565, 310, 350], [575, 285, 320], [585, 260, 300], [597, 290, 310], [605, 300, 380], [612, 330, 390], [620, 200, 330], [630, 210, 245], [638, 168, 260], [648, 255, 270], [658, 240, 280], [668, 230, 260], [676, 155, 220], [683, 220, 270], [690, 260, 285], [700, 280, 350], [708, 350, 390], [715, 370, 395], [725, 350, 390], [735, 310, 370], [742, 290, 310], [755, 280, 310], [765, 240, 280], [772, 215, 265], [782, 265, 300], [795, 310, 360], [803, 350, 390], [812, 325, 350], [822, 265, 300], [832, 250, 290], [838, 195, 300], [845, 290, 340], [852, 330, 355]];
const candles = [];
for (let x = 27; x < 854; x += 5.6) {
  const [a, b] = interp(env, x), px = 965 + x / 3, top = a + (b - a) * 0.4 * rnd(), bot = b - (b - a) * 0.4 * rnd();
  candles.push(line(`M${px} ${400 + a / 3}V${400 + b / 3}`, '#444', 'stroke-width=".7"'));
  candles.push(rect(px - 0.8, 400 + top / 3, 1.7, (bot - top) / 3, ['#222', '#222', '#2a5a34', '#702630', '#111', '#888'][Math.floor(rnd() * 6)]));
}
[[56, 370, 455], [140, 320, 480], [263, 125, 220], [535, 370, 412], [343, 185, 230], [838, 190, 250]].forEach(([x, a, b]) => candles.push(line(`M${965 + x / 3} ${400 + a / 3}V${400 + b / 3}`, '#444', 'stroke-width=".8"')));
const cum = [[25, 745], [35, 765], [45, 760], [60, 800], [75, 825], [88, 850], [100, 815], [110, 808], [120, 820], [135, 855], [145, 885], [180, 885], [185, 872], [195, 860], [215, 858], [240, 862], [250, 845], [260, 805], [275, 790], [290, 765], [305, 755], [320, 770], [330, 780], [345, 770], [365, 778], [380, 808], [395, 775], [410, 760], [420, 745], [432, 715], [445, 675], [465, 632], [480, 640], [495, 610], [508, 592], [520, 590], [535, 620], [550, 650], [573, 676], [590, 662], [605, 680], [613, 702], [625, 670], [635, 635], [655, 610], [670, 570], [690, 542], [700, 550], [715, 590], [730, 620], [755, 628], [770, 605], [785, 600], [800, 625], [815, 653], [825, 650], [835, 638], [850, 660]];
const bars = [];
for (let x = 24; x < 851; x += 5.6) {
  const y = 400 + interp(cum, x)[0] / 3;
  bars.push(rect(965 + x / 3, 570.5, 1.9, y - 570.5, '#b06464'), rect(965 + x / 3, 570.5, 1, y - 570.5, '#7c2a2e'));
}
draw('#w4', [
  ...grid(971, 1252, [446.5, 457, 467.5, 478.5, 489, 510, 520, 531, 541.5, ...steps(14, 580.5, 8.4, 0, 0).map((d) => d[0])], '#ececec'),
  ...Array.from({ length: 12 }, (_, i) => line(`M${979.5 + 22.6 * i} 431V695`, '#ececec')),
  rect(973, 570, 277, 1, '#6d2226'), ...bars,
  line('M971 499.5H1252', '#333', 'stroke-dasharray="13 4"'), ...candles,
  line('M971 432.3H1252', '#8c1a1a', 'stroke-width="1.4"'),
  line('M971 441.3H1252M971 551.5H1252', '#b85050', 'stroke-dasharray="11 5"'),
  rect(971, 559, 281, 1.4, '#8c2020'), rect(971, 561.4, 281, 1.4, '#999')
]);
```
